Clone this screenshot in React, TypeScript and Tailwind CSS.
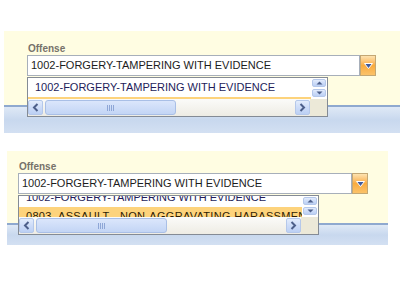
import type { ReactNode } from "react";

const FONT = "font-['Liberation_Sans',Arial,sans-serif]";
const ITEMS = ["1002-FORGERY-TAMPERING WITH EVIDENCE", "0803_ASSAULT - NON-AGGRAVATING HARASSMENT"];

function ScrollBtn({ children, className = "" }: { children: ReactNode; className?: string }) {
    return (
        <div className={`flex items-center justify-center rounded-[2px] border border-[#b5c8ea] bg-gradient-to-b from-[#e3ecfc] via-[#cddcf8] to-[#bcd0f4] ${className}`}>
            {children}
        </div>
    );
}

function Chevron({ dir }: { dir: "left" | "right" }) {
    return (
        <svg width="7" height="9" viewBox="0 0 7 9">
            <path d={dir === "left" ? "M5.5 1 L2 4.5 L5.5 8" : "M1.5 1 L5 4.5 L1.5 8"} fill="none" stroke="#4d5f8a" strokeWidth="2" />
        </svg>
    );
}

function Tri({ up }: { up?: boolean }) {
    return (
        <svg width="7" height="4" viewBox="0 0 7 4">
            <path d={up ? "M0.5 3.5 L3.5 0.5 L6.5 3.5 Z" : "M0.5 0.5 L3.5 3.5 L6.5 0.5 Z"} fill="#4d5f8a" />
        </svg>
    );
}

function DropList({ scroll }: { scroll: number }) {
    return (
        <div className="absolute flex h-[40px] w-[301px] flex-col border border-[#848b95] bg-white">
            <div className="flex h-[21px]">
                <div className="relative flex-1 overflow-hidden">
                    <div style={{ marginTop: -scroll }}>
                        <div className="h-[19px] whitespace-nowrap pl-[7px] text-[11px] leading-[19px] text-[#231c5a]">{ITEMS[0]}</div>
                        <div className="h-[19px] whitespace-nowrap bg-[#fdd37c] pl-[7px] text-[11px] leading-[19px] tracking-[0.3px] text-[#2e1c04]">{ITEMS[1]}</div>
                    </div>
                </div>
                <div className="flex w-[16px] flex-col items-center gap-[2px] bg-white pt-[1px]">
                    <ScrollBtn className="h-[8px] w-[14px]"><Tri up /></ScrollBtn>
                    <ScrollBtn className="h-[8px] w-[14px]"><Tri /></ScrollBtn>
                </div>
            </div>
            <div className="flex h-[17px]">
                <div className="flex flex-1 items-center bg-gradient-to-b from-[#fbfbf9] to-[#eeece4]">
                    <ScrollBtn className="h-[15px] w-[15px]"><Chevron dir="left" /></ScrollBtn>
                    <div className="ml-[2px] flex h-[15px] w-[131px] items-center justify-center rounded-[3px] border border-[#a9bfe6] bg-gradient-to-b from-[#dbe6fb] to-[#c3d5f5]">
                        <div className="flex gap-[1px]">
                            {[0, 1, 2, 3].map((i) => <div key={i} className="h-[6px] w-[1px] bg-[#8ea6d6]" />)}
                        </div>
                    </div>
                    <div className="flex-1" />
                    <ScrollBtn className="h-[15px] w-[15px]"><Chevron dir="right" /></ScrollBtn>
                </div>
                <div className="w-[17px] bg-[#ece9d8]" />
            </div>
        </div>
    );
}

function Combo({ width }: { width: number }) {
    return (
        <div className="flex h-[21px]" style={{ width }}>
            <div className="flex-1 border border-[#a7afba] bg-white pl-[3px] text-[11px] leading-[19px] text-[#1c1c1c]">{ITEMS[0]}</div>
            <div className="flex w-[16px] items-center justify-center border border-[#c3a774] bg-gradient-to-b from-[#fde3b0] via-[#f9ab3c] to-[#fbc36a]">
                <svg width="9" height="6" viewBox="0 0 9 6">
                    <path d="M0.5 0.5 L8.5 0.5 L4.5 5.5 Z" fill="#3e5a9c" stroke="#ffffff" strokeWidth="1" />
                </svg>
            </div>
        </div>
    );
}

function Section({ w, yellowH, blueH, padL, padT, comboW, listTop, scroll, className }: {
    w: number; yellowH: number; blueH: number; padL: number; padT: number; comboW: number; listTop: number; scroll: number; className: string;
}) {
    return (
        <div className={className} style={{ width: w }}>
            <div className="relative bg-[#fffde2]" style={{ height: yellowH, paddingLeft: padL, paddingTop: padT }}>
                <div className="ml-[1px] text-[10px] font-bold leading-[12px] text-[#76726a]">Offense</div>
                <Combo width={comboW} />
                <div className="absolute" style={{ left: padL, top: listTop }}>
                    <DropList scroll={scroll} />
                </div>
            </div>
            <div className="border-t-2 border-[#8fa9cf] bg-gradient-to-b from-[#dfe9f6] via-[#c8d8ee] to-[#d3e0f2]" style={{ height: blueH }} />
        </div>
    );
}

export default function App() {
    return (
        <div className={`h-[300px] w-[400px] overflow-hidden bg-white ${FONT}`}>
            <Section className="ml-[4px] mt-[31px]" w={396} yellowH={74} blueH={28} padL={23} padT={12} comboW={349} listTop={46} scroll={0} />
            <Section className="ml-[7px] mt-[18px]" w={381} yellowH={72} blueH={22} padL={11} padT={10} comboW={350} listTop={44} scroll={8} />
        </div>
    );
}
